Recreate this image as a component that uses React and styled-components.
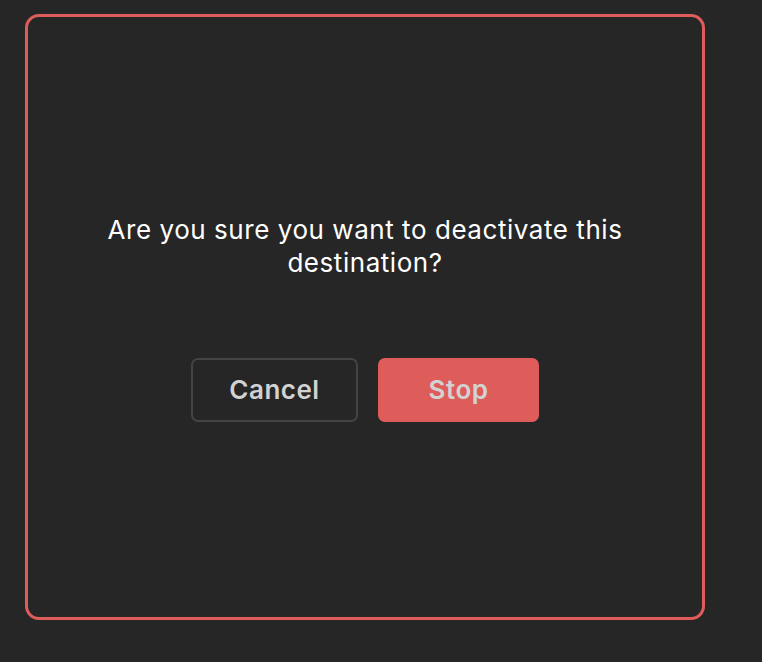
import React from 'react'
import styled, { createGlobalStyle } from 'styled-components'

const GlobalStyle = createGlobalStyle`
  html, body {
    margin: 0;
    padding: 0;
    background: #262626;
  }
  body {
    font-family: Inter, "Noto Sans", sans-serif;
    -webkit-font-smoothing: antialiased;
  }
`

const Page = styled.div`
  padding: 14px 0 0 25px;
  height: 662px;
  box-sizing: border-box;
`

const Dialog = styled.div`
  width: 680px;
  height: 606px;
  box-sizing: border-box;
  border: 3px solid #de5d5a;
  border-radius: 14px;
  background: #262626;
  display: flex;
  flex-direction: column;
  align-items: center;
  justify-content: center;
  gap: 79px;
`

const Message = styled.p`
  margin: 0;
  max-width: 560px;
  text-align: center;
  color: #ffffff;
  font-size: 26px;
  line-height: 33px;
  letter-spacing: 0.55px;
  font-weight: 400;
`

const Actions = styled.div`
  display: flex;
  gap: 20px;
`

const Button = styled.button`
  height: 64px;
  width: ${p => p.$width}px;
  box-sizing: border-box;
  border-radius: 7px;
  font-family: inherit;
  font-size: 26px;
  letter-spacing: 0.5px;
  font-weight: 600;
  color: #d2d2d2;
  cursor: pointer;
  border: 2px solid ${p => (p.$danger ? '#de5d5a' : '#444444')};
  background: ${p => (p.$danger ? '#de5d5a' : 'transparent')};
`

export default function App() {
  return (
    <>
      <GlobalStyle />
      <Page>
        <Dialog>
          <Message>Are you sure you want to deactivate this destination?</Message>
          <Actions>
            <Button $width={167}>Cancel</Button>
            <Button $width={161} $danger>Stop</Button>
          </Actions>
        </Dialog>
      </Page>
    </>
  )
}
